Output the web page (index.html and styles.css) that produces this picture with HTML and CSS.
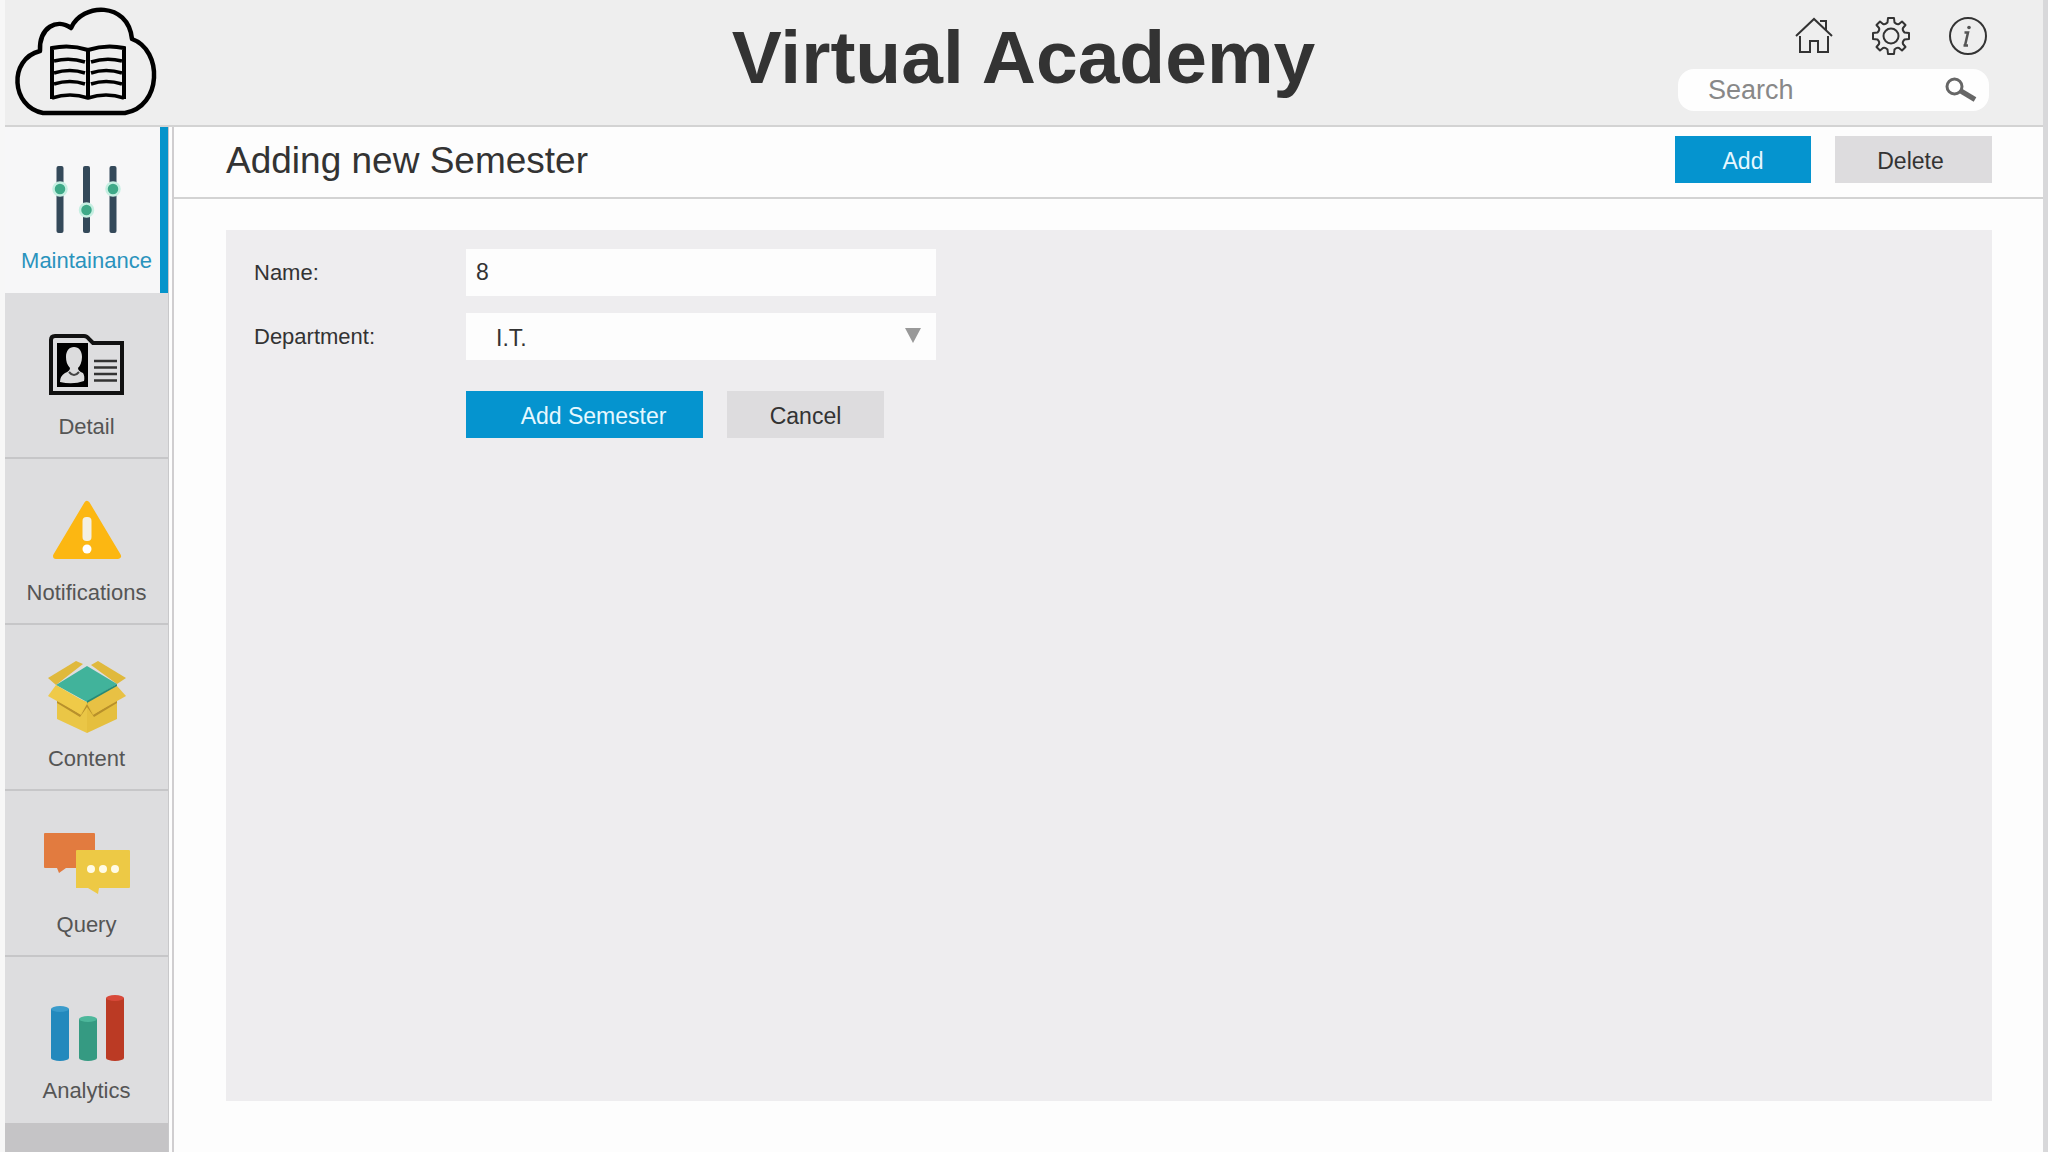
FILE: index.html
```
<!DOCTYPE html>
<html lang="en">
<head>
	<meta charset="utf-8">
	<title>Virtual Academy</title>
	<link rel="stylesheet" href="styles.css">
</head>
<body>
<div class="app">
	<header class="header">
		<a class="logo" href="#" aria-label="Virtual Academy home">
			<svg width="155" height="124" viewBox="5 0 155 124" fill="none" stroke="#000">
				<path stroke-width="4.500" stroke-linejoin="round" d="M43 113C11 107 8 59 40 51C39 27 57 18 71 28C82 3 128 1 132 39C163 50 162 107 125 113Z"/>
				<path stroke-width="4" d="M52 99V48Q70 44 88 50Q106 44 124 48V99M88 50V99"/>
				<path stroke-width="3.500" d="M52 98Q70 92 88 98Q106 92 124 98M54 61Q70 57 85 62M91 62Q106 57 122 61M54 73Q70 68 85 73M91 73Q106 68 122 73M54 84Q70 79 85 84M91 84Q106 79 122 84"/>
			</svg>
		</a>
		<h1 class="title">Virtual Academy</h1>
		<div class="tools">
			<div class="tool-icons">
				<button class="icon-button" type="button" aria-label="Home">
					<svg width="38" height="38" viewBox="0 0 38 38" fill="none" stroke="#333" stroke-width="2">
						<path d="M1 19L19 2L37 19M25 4H31V13M5 19V35H15V24H23V35H33V19"/>
					</svg>
				</button>
				<button class="icon-button" type="button" aria-label="Settings">
					<svg width="38" height="38" viewBox="-19 -19 38 38" fill="none" stroke="#333" stroke-width="2" stroke-linejoin="round">
						<path d="M-3-18H3L3.500-13.500Q6-11 8-12L11-14.500L14.500-11L12-8Q11-6 13.500-3.500L18-3V3L13.500 3.500Q11 6 12 8L14.500 11L11 14.500L8 12Q6 11 3.500 13.500L3 18H-3L-3.500 13.500Q-6 11-8 12L-11 14.500L-14.500 11L-12 8Q-11 6-13.500 3.500L-18 3V-3L-13.500-3.500Q-11-6-12-8L-14.500-11L-11-14.500L-8-12Q-6-11-3.500-13.500Z"/>
						<circle r="7.500"/>
					</svg>
				</button>
				<button class="icon-button" type="button" aria-label="Information">
					<svg width="38" height="38" viewBox="0 0 38 38" fill="none" stroke="#333" stroke-width="2">
						<circle cx="19" cy="19" r="18"/>
						<path stroke="#555" stroke-width="2.500" d="M15.500 15.500H19L16 28.500H14.500M16 28.500H19"/>
						<circle cx="20" cy="10.500" r="1.800" fill="#555" stroke="none"/>
					</svg>
				</button>
			</div>
			<form class="search">
				<input class="search-input" type="text" placeholder="Search" aria-label="Search">
				<button class="search-button" type="button" aria-label="Go">
					<svg width="32" height="26" viewBox="0 0 32 26" fill="none" stroke="#666">
						<circle cx="9.500" cy="9.500" r="7.500" stroke-width="3"/>
						<path stroke-width="5" d="M15 13.500L30 22.500"/>
					</svg>
				</button>
			</form>
		</div>
	</header>

	<div class="body">
		<nav class="sidebar">
			<a class="item active" href="#">
				<svg width="92" height="84" viewBox="0 0 92 84">
					<g fill="#34495a">
						<rect x="15.500" y="9" width="7" height="67" rx="2"/>
						<rect x="42" y="9" width="7" height="67" rx="2"/>
						<rect x="68.500" y="9" width="7" height="67" rx="2"/>
					</g>
					<g fill="#3fa988" stroke="#c6efe2" stroke-width="2.500">
						<circle cx="19" cy="32" r="6.500"/>
						<circle cx="45.500" cy="53" r="6.500"/>
						<circle cx="72" cy="32" r="6.500"/>
					</g>
				</svg>
				<span class="label">Maintainance</span>
			</a>
			<a class="item" href="#">
				<svg width="92" height="84" viewBox="0 0 92 84">
					<path fill="none" stroke="#111" stroke-width="4" d="M10 70V17Q10 13 14 13H43Q46 13 48 16L52 20H81V70Z"/>
					<rect x="16" y="20" width="31" height="44" fill="#000"/>
					<path fill="#dcdcdd" d="M33 24C38 24 41 28 41 34C41 39 39 43 37 45Q37 48 42 50Q44 53 43 58Q32 62 19 59Q19 53 24 50Q29 48 29 45C26 42 25 38 25 34C25 28 28 24 33 24Z"/>
					<path fill="none" stroke="#444" stroke-width="2" d="M28 49Q33 55 38 49"/>
					<path stroke="#333" stroke-width="2.500" d="M53 38H76M53 44.500H76M53 51H76M53 57.500H76"/>
				</svg>
				<span class="label">Detail</span>
			</a>
			<a class="item" href="#">
				<svg width="92" height="84" viewBox="0 0 92 84">
					<path fill="#fcb712" stroke="#fcb712" stroke-width="6" stroke-linejoin="round" d="M46 15L77 67H15Z"/>
					<rect x="41.500" y="28" width="9" height="24" rx="4" fill="#f3f0e4"/>
					<circle cx="46" cy="60" r="4.500" fill="#fff"/>
				</svg>
				<span class="label">Notifications</span>
			</a>
			<a class="item" href="#">
				<svg width="92" height="84" viewBox="0 1 92 84">
					<path fill="#e0b93c" d="M7 24L35 7L42 10L15 31Z"/>
					<path fill="#e0b93c" d="M57 7L85 24L76 30L50 11Z"/>
					<path fill="#eac646" d="M16 36L46 48V79L16 65Z"/>
					<path fill="#e5bf3e" d="M76 36L46 48V79L76 65Z"/>
					<path fill="#b8902b" d="M16 46L40 61L46 50L52 61L76 46V49L53 63L46 53L39 63L16 49Z"/>
					<path fill="#41b39b" d="M46 12L76 30L46 48L15 31Z"/>
					<path fill="#278a76" d="M76 30V33L46 50V47Z"/>
					<path fill="#efca48" d="M15 31L46 49L39 60L7 42Z"/>
					<path fill="#e8c144" d="M76 32L46 49L53 60L85 42Z"/>
				</svg>
				<span class="label">Content</span>
			</a>
			<a class="item" href="#">
				<svg width="92" height="84" viewBox="0 1 92 84">
					<path fill="#e27b3f" d="M4 13H53Q54 13 54 14V48H25L18 53L16 48H4Q3 48 3 47V14Q3 13 4 13Z"/>
					<path fill="#edc945" d="M36 30H88Q89 30 89 31V67Q89 68 88 68H58L57 74L47 68H35V31Q35 30 36 30Z"/>
					<g fill="#fffbe6">
						<circle cx="50" cy="49" r="4"/>
						<circle cx="62" cy="49" r="4"/>
						<circle cx="74" cy="49" r="4"/>
					</g>
				</svg>
				<span class="label">Query</span>
			</a>
			<a class="item" href="#">
				<svg width="92" height="84" viewBox="0 1 92 84">
					<path fill="#2389bd" d="M10 23V72A9 3 0 0 0 28 72V23Z"/>
					<ellipse cx="19" cy="23" rx="9" ry="3" fill="#3a9bcb"/>
					<path fill="#359a82" d="M38 33V72A9 3 0 0 0 56 72V33Z"/>
					<ellipse cx="47" cy="33" rx="9" ry="3" fill="#4db79b"/>
					<path fill="#bb3a24" d="M65 12V72A9 3 0 0 0 83 72V12Z"/>
					<ellipse cx="74" cy="12" rx="9" ry="3" fill="#d8493a"/>
				</svg>
				<span class="label">Analytics</span>
			</a>
		</nav>

		<main class="main">
			<div class="bar">
				<h2 class="heading">Adding new Semester</h2>
				<button class="button primary" type="button">Add</button>
				<button class="button wide delete" type="button">Delete</button>
			</div>
			<form class="panel">
				<label class="field-label" for="name">Name:</label>
				<input class="field" id="name" type="text" value="8">
				<label class="field-label" for="department">Department:</label>
				<div class="select">
					<select class="field field-select" id="department">
						<option>I.T.</option>
					</select>
					<svg class="arrow" width="16" height="15" viewBox="0 0 16 15"><path fill="#999" d="M0 0H16L8 15Z"/></svg>
				</div>
				<div class="actions">
					<button class="button primary submit" type="button">Add Semester</button>
					<button class="button wide" type="button">Cancel</button>
				</div>
			</form>
		</main>
	</div>
</div>
</body>
</html>
```

FILE: styles.css
```
* { box-sizing: border-box; }
body { margin: 0; background: #f7f7f7; color: #333; font: 22px/26px "Liberation Sans", Arial, sans-serif; }
button, input, select { margin: 0; border: 0; font: inherit; color: inherit; }
svg { display: block; }

.app { display: flex; flex-direction: column; min-height: 100vh; margin-left: 5px; border-right: 5px solid #d8d8da; background: #fdfdfd; }

/* header */
.header { display: grid; grid-template-columns: 1fr auto 1fr; align-items: start; height: 127px; padding-right: 54px; border-bottom: 2px solid #d3d3d3; background: #eee; }
.logo { justify-self: start; }
.title { margin: 0; padding: 13px 0 0 53px; font-size: 75px; line-height: 88px; }
.tools { justify-self: end; display: flex; flex-direction: column; align-items: flex-end; gap: 14px; padding-top: 17px; }
.tool-icons { display: flex; gap: 39px; padding-right: 2px; }
.icon-button { padding: 0; background: none; }
.search { display: flex; align-items: center; width: 311px; height: 42px; padding: 0 12px 0 30px; border-radius: 16px; background: #fefefe; }
.search-input { flex: 1; min-width: 0; padding: 0; background: none; font-size: 27px; line-height: 32px; outline: 0; }
.search-input::placeholder { color: #888; opacity: 1; }
.search-button { padding: 0; background: none; }

/* sidebar */
.body { display: flex; flex: 1; }
.sidebar { width: 164px; margin-right: 3px; border-right: 1px solid #c8c8ca; background: #c5c4c6; }
.item { display: flex; flex-direction: column; align-items: center; gap: 7px; height: 166px; padding-top: 30px; border-bottom: 2px solid #c6c6c8; background: #dddddf; color: #555; text-decoration: none; }
.item:last-child { border-bottom: 0; }
.item.active { padding-left: 8px; border-right: 8px solid #0594cb; border-bottom-width: 0; background: #f7f7f8; color: #2a93bd; }

/* content */
.main { display: flex; flex: 1; flex-direction: column; border-left: 2px solid #d0ced0; }
.bar { display: flex; align-items: center; height: 72px; padding: 0 51px 5px 52px; border-bottom: 2px solid #d3d3d3; }
.heading { flex: 1; margin: 0; padding-top: 3px; font-size: 37px; font-weight: normal; line-height: 44px; }
.button { width: 136px; height: 47px; padding: 3px 0 0; background: #dddcde; font-size: 23px; }
.button.primary { background: #0594cf; color: #e6f8ff; }
.button.wide { width: 157px; margin-left: 24px; }
.button.delete { padding-right: 6px; }
.button.submit { width: 237px; padding-left: 18px; }

.panel { display: grid; flex: 1; grid-template-columns: 212px 470px; grid-auto-rows: 47px; align-items: center; row-gap: 17px; margin: 31px 51px 51px 52px; padding: 19px 28px; background: #eeedef; }
.field { width: 100%; height: 47px; padding: 0 10px; background: #fdfdfd; font-size: 23px; }
.select { position: relative; }
.field-select { padding: 3px 30px 0; appearance: none; }
.arrow { position: absolute; top: 15px; right: 15px; pointer-events: none; }
.actions { grid-column: 2; display: flex; padding-top: 28px; }
```
